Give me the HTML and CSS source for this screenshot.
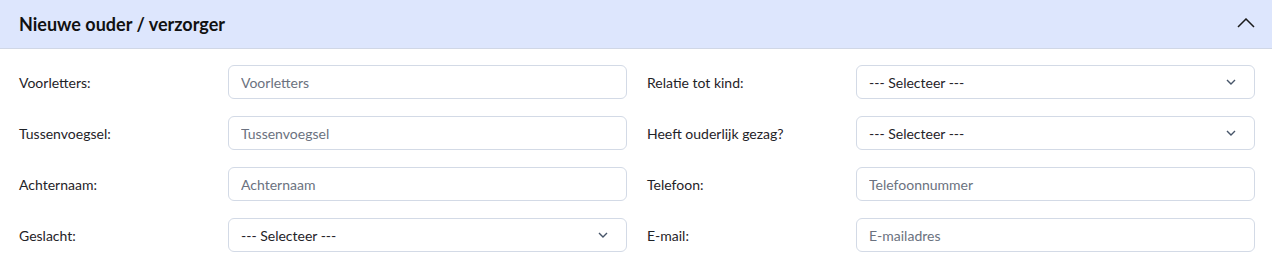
FILE: index.html
```html
<!DOCTYPE html>
<html lang="nl">
<head>
  <meta charset="UTF-8" />
  <meta name="viewport" content="width=device-width, initial-scale=1" />
  <title>Nieuwe ouder / verzorger</title>
  <link rel="stylesheet" href="styles.css">
</head>
<body>
  <section class="card">
    <header class="card-header">
      <h2>Nieuwe ouder / verzorger</h2>
      <button class="collapse-btn" aria-label="Inklappen">
        <svg width="18" height="10" viewBox="0 0 18 10" fill="none"><path d="M1 9 9 1l8 8" stroke="#1a1a1a" stroke-width="1.5"/></svg>
      </button>
    </header>

    <form class="card-body">
      <div class="form-row">
        <label for="voorletters">Voorletters:</label>
        <input id="voorletters" type="text" placeholder="Voorletters">
      </div>
      <div class="form-row">
        <label for="relatie">Relatie tot kind:</label>
        <select id="relatie"><option>--- Selecteer ---</option></select>
      </div>

      <div class="form-row">
        <label for="tussenvoegsel">Tussenvoegsel:</label>
        <input id="tussenvoegsel" type="text" placeholder="Tussenvoegsel">
      </div>
      <div class="form-row">
        <label for="gezag">Heeft ouderlijk gezag?</label>
        <select id="gezag"><option>--- Selecteer ---</option></select>
      </div>

      <div class="form-row">
        <label for="achternaam">Achternaam:</label>
        <input id="achternaam" type="text" placeholder="Achternaam">
      </div>
      <div class="form-row">
        <label for="telefoon">Telefoon:</label>
        <input id="telefoon" type="tel" placeholder="Telefoonnummer">
      </div>

      <div class="form-row">
        <label for="geslacht">Geslacht:</label>
        <select id="geslacht"><option>--- Selecteer ---</option></select>
      </div>
      <div class="form-row">
        <label for="email">E-mail:</label>
        <input id="email" type="email" placeholder="E-mailadres">
      </div>
    </form>
  </section>
</body>
</html>
```

FILE: styles.css
```css
:root {
  --text: #1f2328;
  --muted: #6b7280;
  --border: #d3dae6;
  --header-bg: #dde6fd;
  --radius: 6px;
}
* { box-sizing: border-box; }
body {
  margin: 0;
  font-family: Lato, 'Liberation Sans', sans-serif;
  background: #fff;
  color: var(--text);
}
.card {
  background: #fff;
}
.card-header {
  height: 49px;
  background: var(--header-bg);
  border-bottom: 1px solid #d0d7e6;
  display: flex;
  align-items: center;
  justify-content: space-between;
  padding: 0 17px 0 19px;
}
.card-header h2 {
  margin: 0;
  font-size: 18px;
  font-weight: 700;
  color: #111;
}
.collapse-btn {
  background: none;
  border: none;
  padding: 0;
  display: flex;
  cursor: pointer;
  margin-top: -2px;
}
.card-body {
  display: grid;
  grid-template-columns: 1fr 1fr;
  column-gap: 20px;
  row-gap: 17px;
  padding: 16px 17px 24px 19px;
}
.form-row {
  display: grid;
  grid-template-columns: 209px 1fr;
  align-items: center;
}
.form-row label {
  font-size: 14px;
  color: var(--text);
}
.form-row input,
.form-row select {
  height: 34px;
  width: 100%;
  border: 1px solid var(--border);
  border-radius: var(--radius);
  background: #fff;
  font-family: inherit;
  font-size: 14px;
  color: var(--text);
  padding: 0 12px;
  outline: none;
}
.form-row input::placeholder {
  color: var(--muted);
}
.form-row select {
  appearance: none;
  background-image: url("data:image/svg+xml,%3Csvg xmlns='http://www.w3.org/2000/svg' width='10' height='6' viewBox='0 0 10 6'%3E%3Cpath d='M1 1l4 4 4-4' fill='none' stroke='%23475569' stroke-width='1.4'/%3E%3C/svg%3E");
  background-repeat: no-repeat;
  background-position: right 18px center;
}
```
